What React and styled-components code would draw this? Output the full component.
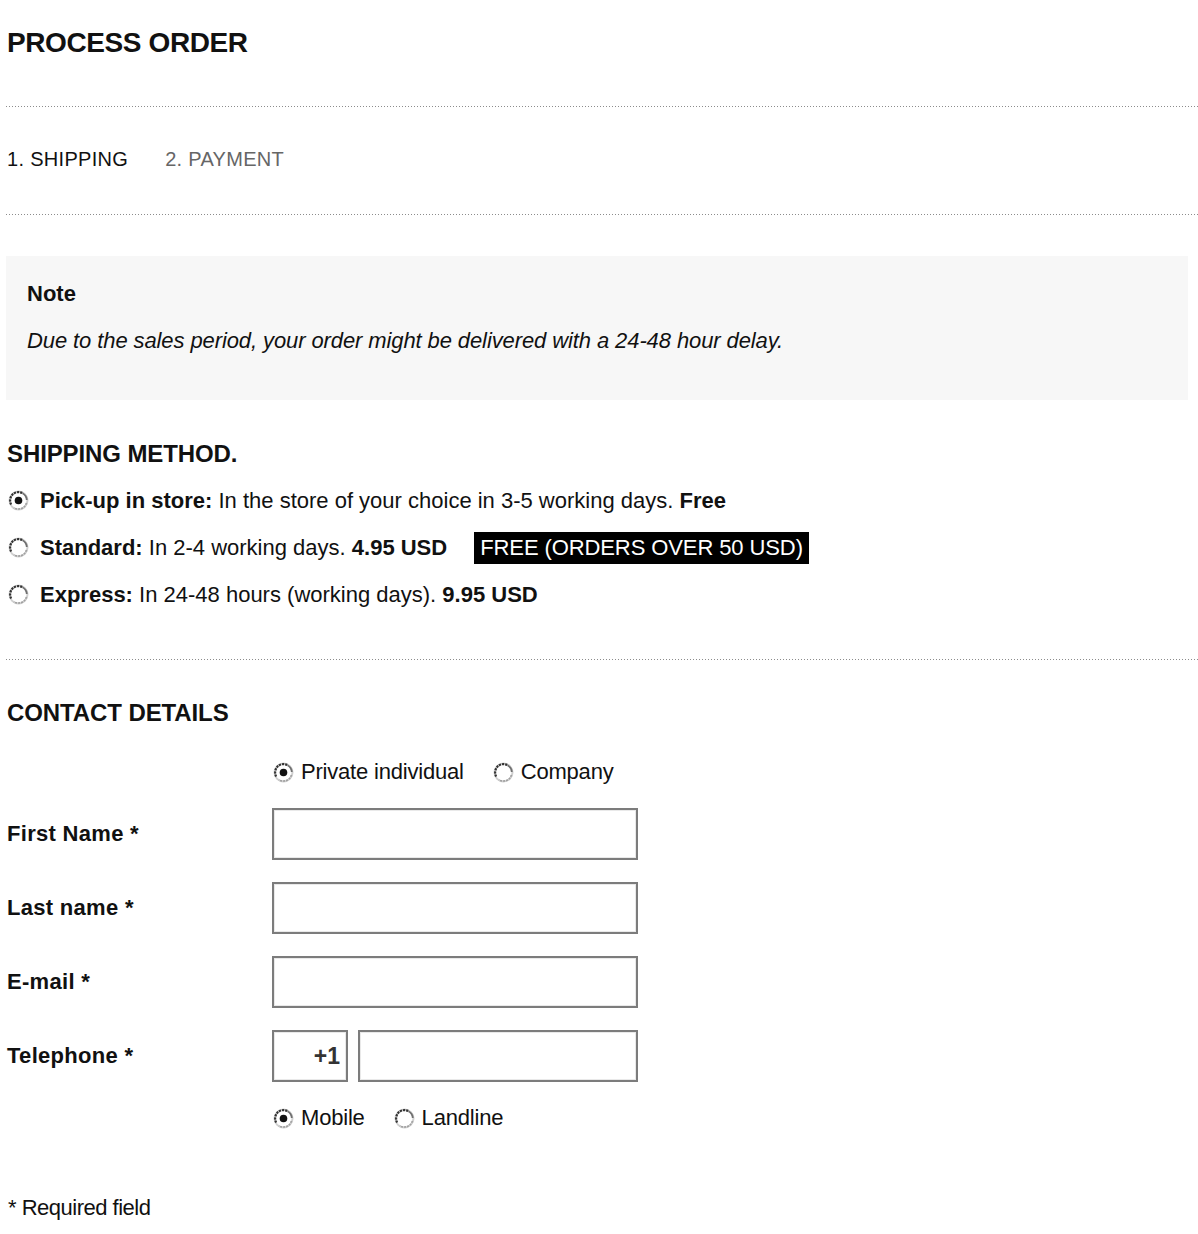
import React from 'react';
import styled, { createGlobalStyle } from 'styled-components';

const GlobalStyle = createGlobalStyle`
  body {
    margin: 0;
    background: #fff;
    font-family: "Liberation Sans", Arial, sans-serif;
    color: #111;
  }
`;

const Page = styled.div({
  width: '1198px',
  padding: '0 0 40px 6px',
  boxSizing: 'border-box',
});

const Title = styled.h1({
  margin: '27px 0 0 1px',
  fontSize: '28px',
  lineHeight: '32px',
  fontWeight: 700,
  letterSpacing: '-0.4px',
});

const Divider = styled.div(props => ({
  height: '1px',
  marginTop: props.$top,
  backgroundImage: 'linear-gradient(to right, #8c8c8c 1px, transparent 1px)',
  backgroundSize: '3px 1px',
  backgroundRepeat: 'repeat-x',
}));

const Steps = styled.div({
  display: 'flex',
  gap: '37px',
  marginTop: '40px',
  paddingLeft: '1px',
  fontSize: '20px',
  lineHeight: '24px',
  letterSpacing: '0.3px',
});

const Step = styled.span(props => ({
  color: props.$active ? '#111' : '#666',
}));

const NoteBox = styled.section({
  marginTop: '41px',
  marginRight: '10px',
  height: '144px',
  boxSizing: 'border-box',
  padding: '26px 21px 0',
  background: '#f7f7f7',

  'h3': {
    margin: 0,
    fontSize: '22px',
    lineHeight: '24px',
    fontWeight: 700,
  },

  'p': {
    margin: '23px 0 0',
    fontSize: '22px',
    lineHeight: '24px',
    fontStyle: 'italic',
    letterSpacing: '-0.1px',
  },
});

const Heading = styled.h2(props => ({
  margin: `${props.$top} 0 0 1px`,
  fontSize: '24px',
  lineHeight: '26px',
  fontWeight: 700,
  letterSpacing: '-0.1px',
}));

const Methods = styled.div({
  marginTop: '10px',
});

const MethodRow = styled.label({
  display: 'flex',
  alignItems: 'center',
  height: '47px',
  fontSize: '22px',
  paddingLeft: '1px',

  'b': { fontWeight: 700 },
});

const RadioMark = styled.svg(props => ({
  width: '23px',
  height: '23px',
  flex: 'none',
  marginRight: props.$gap || '10px',
}));

const Badge = styled.span({
  marginLeft: '27px',
  background: '#000',
  color: '#fff',
  padding: '4px 6px',
  lineHeight: '24px',
  letterSpacing: '-0.1px',
});

const ChoiceRow = styled.div(props => ({
  display: 'flex',
  alignItems: 'center',
  height: '30px',
  marginTop: props.$top,
  paddingLeft: '266px',
  gap: '28px',
  fontSize: '22px',
  letterSpacing: '-0.2px',
}));

const Choice = styled.label({
  display: 'flex',
  alignItems: 'center',
});

const Fields = styled.div({
  display: 'flex',
  flexDirection: 'column',
  gap: '22px',
  marginTop: '21px',
});

const FieldRow = styled.div({
  display: 'grid',
  gridTemplateColumns: '266px 366px',
  alignItems: 'center',
});

const Label = styled.label({
  fontSize: '22px',
  fontWeight: 700,
  paddingLeft: '1px',
  letterSpacing: '0.3px',
});

const Input = styled.input(props => ({
  width: props.$width || '366px',
  height: '52px',
  boxSizing: 'border-box',
  border: '2px solid #7c7c7c',
  boxShadow: 'inset 0 0 0 1px #e9e9e9',
  background: '#fff',
  fontFamily: '"Liberation Sans", Arial, sans-serif',
  fontSize: '23px',
  fontWeight: 700,
  color: '#333',
  textAlign: props.$right ? 'right' : 'left',
  padding: '0 6px',
  outline: 'none',
}));

const PhoneGroup = styled.div({
  display: 'flex',
  gap: '10px',
});

const Footnote = styled.p({
  margin: '63px 0 0 2px',
  fontSize: '22px',
  lineHeight: '24px',
  letterSpacing: '-0.5px',
});

const Radio = ({ checked, gap }) => (
  <RadioMark viewBox="0 0 23 23" $gap={gap}>
    <circle cx="11.5" cy="11.5" r="9" fill="#fff" stroke="#d0d0d0" strokeWidth="2" />
    <path d="M4.2 15.5 A8.3 8.3 0 0 1 15.5 4.2" fill="none" stroke="#333" strokeWidth="2.2" strokeDasharray="2.2 0.9" />
    <path d="M15.5 4.2 A8.3 8.3 0 0 1 19.8 11" fill="none" stroke="#707070" strokeWidth="1.8" />
    <path d="M19.4 14 A8.3 8.3 0 0 1 7 18.8" fill="none" stroke="#a0a0a0" strokeWidth="1.6" strokeDasharray="2 1" />
    {checked && <circle cx="11.5" cy="11.5" r="3.8" fill="#111" />}
  </RadioMark>
);

const App = () => {
  return (
    <Page>
      <GlobalStyle />
      <Title>PROCESS ORDER</Title>
      <Divider $top="47px" />

      <Steps>
        <Step $active>1. SHIPPING</Step>
        <Step>2. PAYMENT</Step>
      </Steps>
      <Divider $top="43px" />

      <NoteBox>
        <h3>Note</h3>
        <p>Due to the sales period, your order might be delivered with a 24-48 hour delay.</p>
      </NoteBox>

      <Heading $top="41px">SHIPPING METHOD.</Heading>
      <Methods>
        <MethodRow>
          <Radio checked />
          <span><b>Pick-up in store:</b> In the store of your choice in 3-5 working days. <b>Free</b></span>
        </MethodRow>
        <MethodRow>
          <Radio />
          <span><b>Standard:</b> In 2-4 working days. <b>4.95 USD</b></span>
          <Badge>FREE (ORDERS OVER 50 USD)</Badge>
        </MethodRow>
        <MethodRow>
          <Radio />
          <span><b>Express:</b> In 24-48 hours (working days). <b>9.95 USD</b></span>
        </MethodRow>
      </Methods>
      <Divider $top="41px" />

      <Heading $top="40px">CONTACT DETAILS</Heading>
      <ChoiceRow $top="31px">
        <Choice><Radio checked gap="6px" />Private individual</Choice>
        <Choice><Radio gap="6px" />Company</Choice>
      </ChoiceRow>

      <Fields>
        <FieldRow>
          <Label>First Name *</Label>
          <Input type="text" />
        </FieldRow>
        <FieldRow>
          <Label>Last name *</Label>
          <Input type="text" />
        </FieldRow>
        <FieldRow>
          <Label>E-mail *</Label>
          <Input type="email" />
        </FieldRow>
        <FieldRow>
          <Label>Telephone *</Label>
          <PhoneGroup>
            <Input type="text" $width="76px" $right defaultValue="+1" />
            <Input type="tel" $width="280px" />
          </PhoneGroup>
        </FieldRow>
      </Fields>

      <ChoiceRow $top="21px">
        <Choice><Radio checked gap="6px" />Mobile</Choice>
        <Choice><Radio gap="6px" />Landline</Choice>
      </ChoiceRow>

      <Footnote>* Required field</Footnote>
    </Page>
  );
};

export default App;
